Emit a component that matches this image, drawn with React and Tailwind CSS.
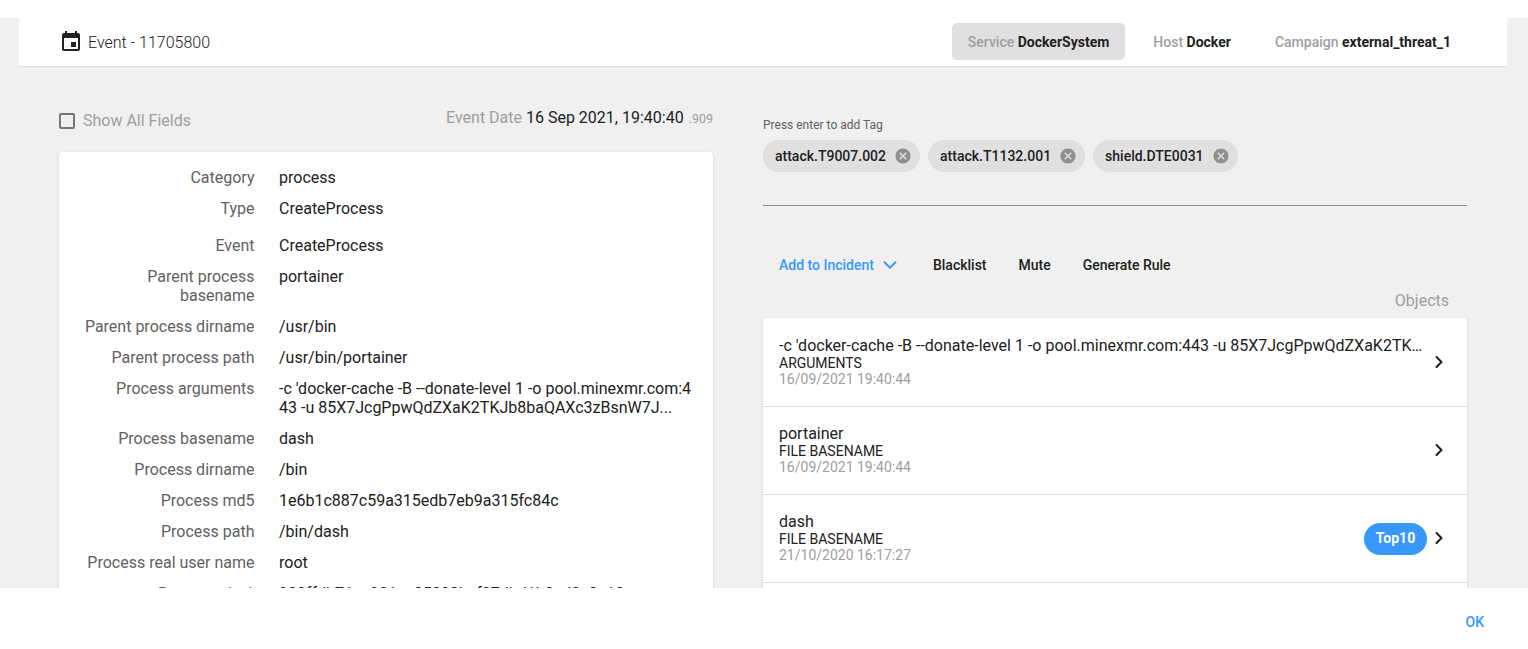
import React from 'react';
import { ChevronDown, ChevronRight } from 'lucide-react';

const fields = [
  { label: 'Category', value: 'process' },
  { label: 'Type', value: 'CreateProcess', extra: true },
  { label: 'Event', value: 'CreateProcess' },
  { label: 'Parent process basename', value: 'portainer' },
  { label: 'Parent process dirname', value: '/usr/bin' },
  { label: 'Parent process path', value: '/usr/bin/portainer' },
  { label: 'Process arguments', value: "-c 'docker-cache -B --donate-level 1 -o pool.minexmr.com:443 -u 85X7JcgPpwQdZXaK2TKJb8baQAXc3zBsnW7J..." },
  { label: 'Process basename', value: 'dash' },
  { label: 'Process dirname', value: '/bin' },
  { label: 'Process md5', value: '1e6b1c887c59a315edb7eb9a315fc84c' },
  { label: 'Process path', value: '/bin/dash' },
  { label: 'Process real user name', value: 'root' },
  { label: 'Process sha1', value: '900ffdb71ac981ec85308bcf07dbd1b3ed3c3a18' },
];

const objects = [
  { title: "-c 'docker-cache -B --donate-level 1 -o pool.minexmr.com:443 -u 85X7JcgPpwQdZXaK2TKJb8baQAXc3zBsnW7J", type: 'ARGUMENTS', date: '16/09/2021 19:40:44' },
  { title: 'portainer', type: 'FILE BASENAME', date: '16/09/2021 19:40:44' },
  { title: 'dash', type: 'FILE BASENAME', date: '21/10/2020 16:17:27', top: true },
  { title: 'root', type: 'USER NAME', date: '21/10/2020 16:17:27' },
];

const tags = ['attack.T9007.002', 'attack.T1132.001', 'shield.DTE0031'];

const CalendarIcon = () => (
  <svg width="24" height="24" viewBox="0 0 24 24" fill="#212121">
    <path d="M17 12h-5v5h5v-5zM16 1v2H8V1H6v2H5c-1.11 0-1.99.9-1.99 2L3 19c0 1.1.89 2 2 2h14c1.1 0 2-.9 2-2V5c0-1.1-.9-2-2-2h-1V1h-2zm3 18H5V8h14v11z" />
  </svg>
);

const CancelIcon = () => (
  <svg width="18" height="18" viewBox="0 0 24 24" fill="#8f8f8f">
    <path d="M12 2C6.47 2 2 6.47 2 12s4.47 10 10 10 10-4.47 10-10S17.53 2 12 2zm5 13.59L15.59 17 12 13.41 8.41 17 7 15.59 10.59 12 7 8.41 8.41 7 12 10.59 15.59 7 17 8.41 13.41 12 17 15.59z" />
  </svg>
);

const HeaderTab = ({ label, value, active }) => (
  <div className={`h-[37px] pt-[2px] px-4 flex items-center rounded-[5px] text-[14px] whitespace-nowrap ${active ? 'bg-[#e0e0e0]' : ''}`}>
    <span className="text-[#9e9e9e] font-medium">{label}&nbsp;</span>
    <span className="text-[#212121] font-bold">{value}</span>
  </div>
);

export default function App() {
  return (
    <div className="h-[649px] w-[1528px] overflow-hidden bg-white flex flex-col font-['Roboto',sans-serif]">
      <div className="h-[18px] shrink-0" />

      <div className="h-[570px] shrink-0 bg-[#f0f0f0] px-[19px] overflow-hidden">
        {/* Header */}
        <div className="h-[49px] w-[1488px] bg-white border-b border-[#e0e0e0] flex items-center justify-between pl-[40px] pr-[40px]">
          <div className="flex items-center gap-[5px] text-[16px] font-light text-[#212121]">
            <CalendarIcon />
            <span className="pt-[2px]">Event - 11705800</span>
          </div>
          <div className="flex items-center gap-[12px] mb-[1px]">
            <HeaderTab label="Service" value="DockerSystem" active />
            <HeaderTab label="Host" value="Docker" />
            <HeaderTab label="Campaign" value="external_threat_1" />
          </div>
        </div>

        <div className="flex pl-[40px]">
          {/* Left column */}
          <div className="w-[654px] shrink-0">
            <div className="h-[85px] pt-[32px] flex justify-between items-start">
              <div className="mt-[10px] flex items-center gap-[8px] h-[24px] text-[16px] text-[#9e9e9e]">
                <span className="w-[16px] h-[16px] border-2 border-[#757575] rounded-[2px]" />
                <span>Show All Fields</span>
              </div>
              <div className="mt-[7px] h-[20px] flex items-baseline text-[16px] whitespace-nowrap">
                <span className="text-[#9e9e9e]">Event Date&nbsp;</span>
                <span className="text-[#212121]">16 Sep 2021, 19:40:40&nbsp;</span>
                <span className="ml-[1px] text-[12.5px] text-[#9e9e9e]">.909</span>
              </div>
            </div>
            <div className="bg-white rounded shadow-[0_1px_3px_rgba(0,0,0,0.15)] pt-[16px] h-[500px]">
              {fields.map((f) => (
                <div key={f.label} className={`flex pl-[23.5px] text-[16px] leading-[19px] ${f.extra ? 'mb-[18px]' : 'mb-[12px]'}`}>
                  <div className="w-[172px] shrink-0 text-right text-[#616161]">{f.label}</div>
                  <div className="ml-[24.5px] w-[416px] text-[#212121] break-all">{f.value}</div>
                </div>
              ))}
            </div>
          </div>

          {/* Right column */}
          <div className="ml-[50px] w-[704px] shrink-0">
            <div className="pt-[51px] text-[12px] leading-[14px] text-[#616161]">Press enter to add Tag</div>
            <div className="mt-[8px] flex gap-[8px]">
              {tags.map((t) => (
                <div key={t} className="h-[32px] rounded-full bg-[#e0e0e0] pl-[12px] pr-[8px] flex items-center gap-[8px] text-[14px] font-medium text-[#212121]">
                  <span>{t}</span>
                  <CancelIcon />
                </div>
              ))}
            </div>
            <div className="mt-[33px] border-b border-[#8f8f8f]" />
            <div className="mt-[47px] h-[24px] flex items-center text-[14px] font-medium text-[#212121] pl-[16px]">
              <span className="text-[#3897fb]">Add to Incident</span>
              <ChevronDown className="ml-[5px] text-[#3897fb]" size={22} strokeWidth={2} />
              <span className="ml-[32px]">Blacklist</span>
              <span className="ml-[32px]">Mute</span>
              <span className="ml-[32px]">Generate Rule</span>
            </div>
            <div className="mt-[12px] h-[20px] text-right text-[16px] text-[#9e9e9e] pr-[18px]">Objects</div>
            <div className="mt-[9px] pt-[1px] bg-white rounded shadow-[0_1px_3px_rgba(0,0,0,0.15)]">
              {objects.map((o) => (
                <div key={o.title} className="h-[88px] pb-[2px] flex items-center border-b border-[#e0e0e0] pl-[16px] pr-[18px]">
                  <div className="min-w-0 flex-1 pr-[5px]">
                    <div className="text-[16px] leading-[19px] text-[#212121] truncate">{o.title}</div>
                    <div className="text-[14px] leading-[16px] text-[#212121]">{o.type}</div>
                    <div className="text-[14px] leading-[16px] text-[#9e9e9e]">{o.date}</div>
                  </div>
                  {o.top && (
                    <div className="h-[32px] w-[63px] mr-[1px] mt-[2px] rounded-full bg-[#3897fb] text-white text-[14px] font-bold flex items-center justify-center">Top10</div>
                  )}
                  <ChevronRight className="ml-[1px] text-[#212121]" size={20} strokeWidth={2.5} />
                </div>
              ))}
            </div>
          </div>
        </div>
      </div>

      {/* Footer */}
      <div className="h-[61px] shrink-0 bg-white flex items-center justify-end pr-[44px] pt-[8px]">
        <span className="text-[14px] font-medium text-[#3897fb]">OK</span>
      </div>
    </div>
  );
}
